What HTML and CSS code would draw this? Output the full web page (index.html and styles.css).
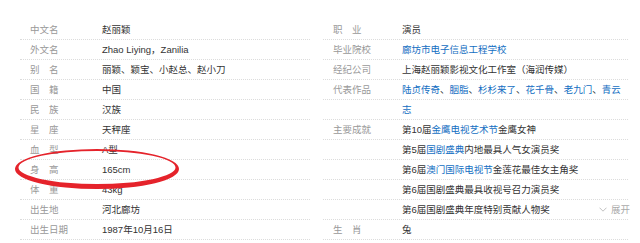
FILE: index.html
```
<!DOCTYPE html>
<html lang="zh">
<head>
<meta charset="utf-8">
<link rel="stylesheet" href="styles.css">
</head>
<body>
<div class="basic-info">
  <div class="col col-left">
    <div class="row"><span class="lbl">中文名</span><span class="val">赵丽颖</span></div>
    <div class="row"><span class="lbl">外文名</span><span class="val">Zhao Liying，Zanilia</span></div>
    <div class="row"><span class="lbl">别　名</span><span class="val">丽颖、颖宝、小赵总、赵小刀</span></div>
    <div class="row"><span class="lbl">国　籍</span><span class="val">中国</span></div>
    <div class="row"><span class="lbl">民　族</span><span class="val">汉族</span></div>
    <div class="row"><span class="lbl">星　座</span><span class="val">天秤座</span></div>
    <div class="row"><span class="lbl">血　型</span><span class="val">A型</span></div>
    <div class="row"><span class="lbl">身　高</span><span class="val">165cm</span></div>
    <div class="row"><span class="lbl">体　重</span><span class="val">43kg</span></div>
    <div class="row"><span class="lbl">出生地</span><span class="val">河北廊坊</span></div>
    <div class="row"><span class="lbl">出生日期</span><span class="val">1987年10月16日</span></div>
  </div>
  <div class="col col-right">
    <div class="row"><span class="lbl">职　业</span><span class="val">演员</span></div>
    <div class="row"><span class="lbl">毕业院校</span><span class="val"><a class="lnk">廊坊市电子信息工程学校</a></span></div>
    <div class="row"><span class="lbl">经纪公司</span><span class="val">上海赵丽颖影视文化工作室（海润传媒）</span></div>
    <div class="row"><span class="lbl">代表作品</span><span class="val"><a class="lnk">陆贞传奇</a>、<a class="lnk">胭脂</a>、<a class="lnk">杉杉来了</a>、<a class="lnk">花千骨</a>、<a class="lnk">老九门</a>、<a class="lnk">青云</a></span></div>
    <div class="row"><span class="lbl"></span><span class="val"><a class="lnk">志</a></span></div>
    <div class="row"><span class="lbl">主要成就</span><span class="val">第10届<a class="lnk">金鹰电视艺术节</a>金鹰女神</span></div>
    <div class="row"><span class="lbl"></span><span class="val">第5届<a class="lnk">国剧盛典</a>内地最具人气女演员奖</span></div>
    <div class="row"><span class="lbl"></span><span class="val">第6届<a class="lnk">澳门国际电视节</a>金莲花最佳女主角奖</span></div>
    <div class="row"><span class="lbl"></span><span class="val">第6届国剧盛典最具收视号召力演员奖</span></div>
    <div class="row"><span class="lbl"></span><span class="val">第6届国剧盛典年度特别贡献人物奖</span><span class="more"><svg class="chev" width="8" height="5" viewBox="0 0 8 5"><polyline points="0.5,0.7 4,4.2 7.5,0.7" fill="none" stroke="#c0c0c0" stroke-width="1"/></svg>展开</span></div>
    <div class="row"><span class="lbl">生　肖</span><span class="val">兔</span></div>
  </div>
  <svg class="mark" width="180" height="48" viewBox="0 0 180 48">
    <path fill="#e5232b" fill-rule="evenodd" d="M1,23 A82,20 0 1,0 165,23 A82,20 0 1,0 1,23 Z M4.5,21.5 A78.5,16.5 0 1,0 161.5,21.5 A78.5,16.5 0 1,0 4.5,21.5 Z"/>
  </svg>
</div>
</body>
</html>
```

FILE: styles.css
```
html, body {
  margin: 0;
  padding: 0;
  background: #fff;
}
body {
  font-family: "Liberation Sans", "Noto Sans CJK SC", sans-serif;
  font-size: 9.5px;
  color: #333;
}
.basic-info {
  position: relative;
  display: flex;
  gap: 13px;
  padding: 20px 0 0 20px;
}
.col {
  display: flex;
  flex-direction: column;
}
.col-left {
  width: 290px;
}
.col-right {
  width: 305px;
}
.row {
  display: flex;
  align-items: center;
  height: 19px;
  line-height: 19px;
  border-bottom: 1px dotted #dcdcdc;
  padding-left: 10px;
  white-space: nowrap;
}
.lbl {
  flex: 0 0 72px;
  color: #999;
}
.col-right .lbl {
  flex-basis: 69px;
}
.val {
  flex: 1 1 auto;
  color: #333;
}
.lnk {
  color: #136ec2;
  text-decoration: none;
}
.more {
  display: flex;
  align-items: center;
  gap: 4px;
  color: #aaa;
  margin-right: -2px;
}
.mark {
  position: absolute;
  left: 14px;
  top: 146px;
}
```
